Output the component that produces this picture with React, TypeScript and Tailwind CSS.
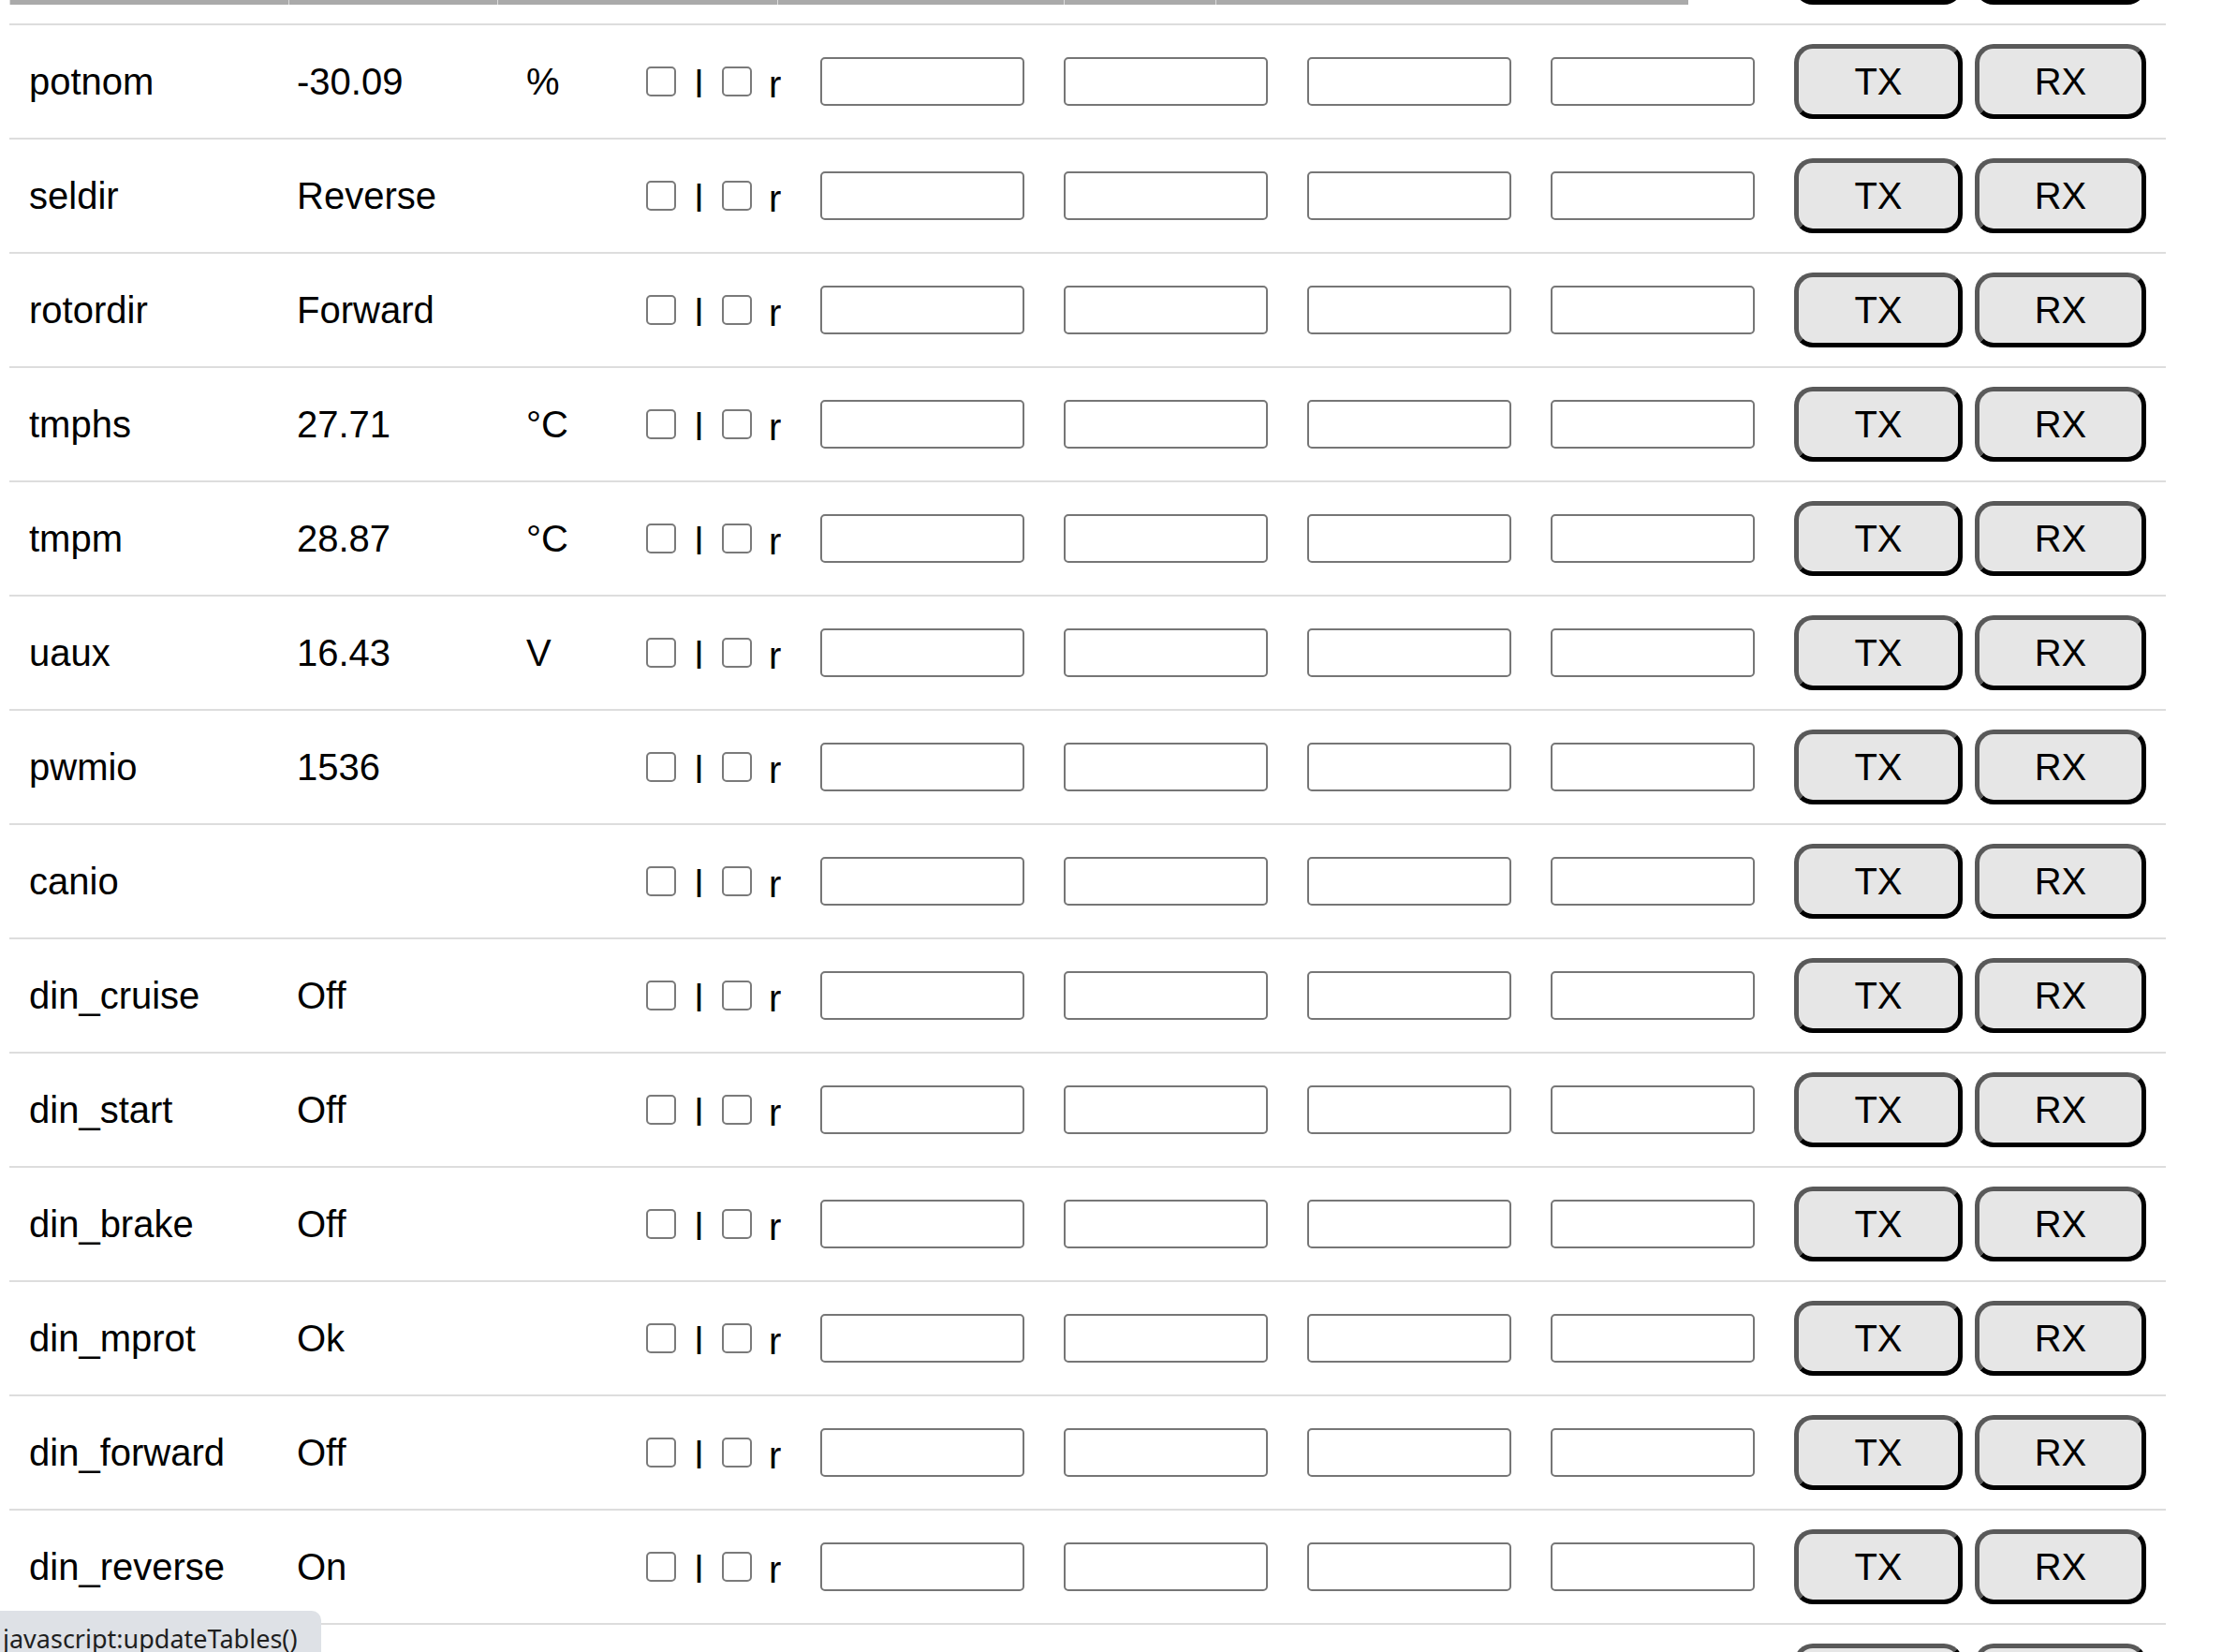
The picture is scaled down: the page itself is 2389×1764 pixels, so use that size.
import React from "react";

type Param = { name: string; value: string; unit: string; partial?: boolean };

const params: Param[] = [
  { name: "", value: "", unit: "", partial: true },
  { name: "potnom", value: "-30.09", unit: "%" },
  { name: "seldir", value: "Reverse", unit: "" },
  { name: "rotordir", value: "Forward", unit: "" },
  { name: "tmphs", value: "27.71", unit: "°C" },
  { name: "tmpm", value: "28.87", unit: "°C" },
  { name: "uaux", value: "16.43", unit: "V" },
  { name: "pwmio", value: "1536", unit: "" },
  { name: "canio", value: "", unit: "" },
  { name: "din_cruise", value: "Off", unit: "" },
  { name: "din_start", value: "Off", unit: "" },
  { name: "din_brake", value: "Off", unit: "" },
  { name: "din_mprot", value: "Ok", unit: "" },
  { name: "din_forward", value: "Off", unit: "" },
  { name: "din_reverse", value: "On", unit: "" },
  { name: "", value: "", unit: "", partial: true },
];

// bottom edge of the sticky header that overlays the first row
const headerCols = [298, 223, 299, 306, 162, 505];

function ParamRow({ p, first }: { p: Param; first?: boolean }) {
  return (
    <div
      className={`flex h-[122px] items-center border-b-2 border-[#dddddd] ${
        first ? "-mt-[95px]" : ""
      }`}
    >
      <div className="w-[307px] pl-[21px]">{p.name}</div>
      <div className="w-[245px]">{p.value}</div>
      <div className="w-[128px]">{p.unit}</div>
      <div className="flex w-[186px] items-center">
        <input
          type="checkbox"
          className="h-[32px] w-[32px] appearance-none rounded-[5px] border-2 border-[#7a7a7a] bg-white"
        />
        <span className="ml-[20px] translate-y-[3px]">{p.partial ? "" : "l"}</span>
        <input
          type="checkbox"
          className="ml-[20px] h-[32px] w-[32px] appearance-none rounded-[5px] border-2 border-[#7a7a7a] bg-white"
        />
        <span className="ml-[18px] translate-y-[3px]">{p.partial ? "" : "r"}</span>
      </div>
      {[0, 1, 2, 3].map((i) => (
        <div key={i} className="w-[260px]">
          <input
            type="text"
            className="h-[52px] w-[218px] rounded-[5px] border-2 border-[#767676] bg-white"
          />
        </div>
      ))}
      <button className="flex h-[80px] w-[180px] items-center justify-center rounded-[20px] border-[5px] border-t-[#595959] border-l-[#595959] border-r-black border-b-black bg-[#e6e6e6] leading-normal text-black">
        {p.partial ? "" : "TX"}
      </button>
      <button className="ml-[13px] flex h-[80px] w-[183px] items-center justify-center rounded-[20px] border-[5px] border-t-[#595959] border-l-[#595959] border-r-black border-b-black bg-[#e6e6e6] leading-normal text-black">
        {p.partial ? "" : "RX"}
      </button>
    </div>
  );
}

export default function App() {
  return (
    <div className="relative h-[1764px] overflow-hidden bg-white font-['Liberation_Sans',Arial,sans-serif] text-[40px] leading-normal text-black">
      <div className="ml-[10px] w-[2303px]">
        {params.map((p, i) => (
          <ParamRow key={i} p={p} first={i === 0} />
        ))}
      </div>

      <div className="absolute left-[10px] top-0 flex h-[5px] bg-[#aaaaaa]">
        {headerCols.map((w, i) => (
          <div
            key={i}
            className="h-full border-l border-[#dcdcdc]"
            style={{ width: w }}
          />
        ))}
      </div>

      <div className="absolute bottom-0 left-0 h-[44px] w-[343px] rounded-tr-[10px] bg-[#dee1e6] pl-[3px] pt-[12px] font-['Noto_Sans',sans-serif] text-[27px] leading-[36px] text-[#1f1f1f]">
        javascript:updateTables()
      </div>
    </div>
  );
}
